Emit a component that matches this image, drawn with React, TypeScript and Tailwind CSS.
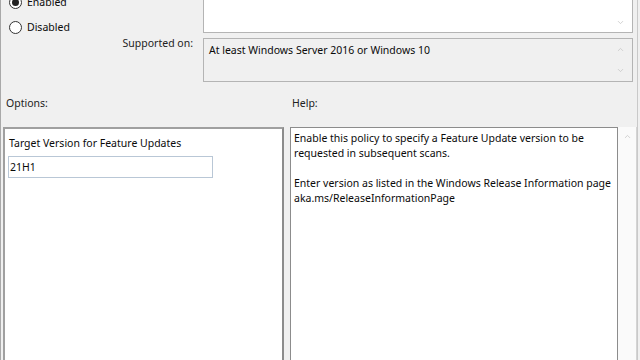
import { ChevronDown, ChevronUp } from "lucide-react";

function RadioOption({ label, checked }: { label: string; checked?: boolean }) {
  return (
    <div className="flex items-center h-[25px] pl-[8px]">
      <span className="w-[13px] h-[13px] rounded-full border border-[#333] bg-white flex items-center justify-center">
        {checked && <span className="w-[7px] h-[7px] rounded-full bg-[#222]" />}
      </span>
      <span className="ml-[5px]">{label}</span>
    </div>
  );
}

export default function App() {
  return (
    <div
      className="w-[640px] h-[360px] overflow-hidden bg-[#f0f0f0] flex text-[10.5px] text-[#0a0a0a] leading-[15px]"
      style={{ fontFamily: '"Noto Sans", "Open Sans", sans-serif' }}
    >
      <div className="w-[637px] h-full flex flex-col border-l border-[#a9a9a9]">
        {/* State + supported on */}
        <div className="flex">
          <div className="w-[202px] flex flex-col">
            <div className="-mt-[10px]">
              <RadioOption label="Enabled" checked />
              <RadioOption label="Disabled" />
            </div>
            <div className="text-right pr-[10px] -mt-[4px] text-[#222]">Supported on:</div>
          </div>
          <div className="w-[430px] flex flex-col">
            <div className="h-[33px] bg-white border border-t-0 border-[#b4b4b4] flex justify-end items-end pr-[7px] pb-[5px]">
              <ChevronDown size={9} className="text-[#c4c4c4]" strokeWidth={2} />
            </div>
            <div className="mt-[5px] h-[44px] border border-[#b4b4b4] bg-[#f0f0f0] flex justify-between pl-[5px] pr-[7px]">
              <span className="mt-[4px]">At least Windows Server 2016 or Windows 10</span>
              <div className="flex flex-col justify-between py-[6px]">
                <ChevronUp size={9} className="text-[#c4c4c4]" strokeWidth={2} />
                <ChevronDown size={9} className="text-[#c4c4c4]" strokeWidth={2} />
              </div>
            </div>
          </div>
        </div>

        {/* Section labels */}
        <div className="flex mt-[14px] text-[#222]">
          <span className="w-[290px] pl-[5px]">Options:</span>
          <span className="pl-[1px]">Help:</span>
        </div>

        {/* Panels */}
        <div className="flex mt-[16px] flex-1">
          <div className="ml-[2px] w-[281px] bg-white border-2 border-b-0 border-[#a0a0a0] border-r-[#8c8c8c] flex flex-col pl-[3px] pt-[7px]">
            <span className="pl-[1px]">Target Version for Feature Updates</span>
            <div className="mt-[5px] w-[205px] h-[22px] border border-[#b9c7d6] flex items-center pl-[1px]">
              21H1
            </div>
          </div>
          <div className="ml-[6px] flex-1 flex">
            <div className="w-[328px] bg-white border border-b-0 border-[#8c8c8c] pl-[3px] pt-[3px]">
              <p>Enable this policy to specify a Feature Update version to be requested in subsequent scans.</p>
              <p className="mt-[15px]">Enter version as listed in the Windows Release Information page aka.ms/ReleaseInformationPage</p>
            </div>
            <div className="flex-1 bg-[#fafafa] border-r border-[#d4d4d4] flex justify-center pt-[5px]">
              <ChevronUp size={9} className="text-[#c4c4c4]" strokeWidth={2} />
            </div>
          </div>
        </div>
      </div>
      <div className="w-[1px] h-full bg-[#c9c9c9]" />
    </div>
  );
}
